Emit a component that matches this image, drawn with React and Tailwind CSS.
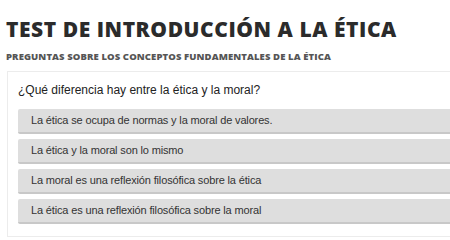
const options = [
  'La ética se ocupa de normas y la moral de valores.',
  'La ética y la moral son lo mismo',
  'La moral es una reflexión filosófica sobre la ética',
  'La ética es una reflexión filosófica sobre la moral',
]

export default function App() {
  return (
    <div className="w-[450px] h-[240px] overflow-hidden bg-white">
      <div className="pl-[6px] pt-[16px]">
        <h1 className="font-['Open_Sans',sans-serif] font-extrabold text-[21px] leading-[26px] text-[#2b2b2b] tracking-[0.55px] whitespace-nowrap">
          TEST DE INTRODUCCIÓN A LA ÉTICA
        </h1>
        <h2 className="mt-[9px] font-['Open_Sans',sans-serif] font-extrabold text-[9.5px] leading-[12px] text-[#555] tracking-[0.1px] whitespace-nowrap">
          PREGUNTAS SOBRE LOS CONCEPTOS FUNDAMENTALES DE LA ÉTICA
        </h2>
      </div>

      <div className="ml-[7px] mt-[8px] w-[460px] border border-[#ececec] bg-white pl-[10px] pt-[10px] pb-[12px]">
        <p className="font-['Liberation_Sans',Arial,sans-serif] text-[12px] leading-[16px] text-[#222]">
          ¿Qué diferencia hay entre la ética y la moral?
        </p>
        <div className="mt-[11px] flex flex-col gap-[5px]">
          {options.map((opt) => (
            <div
              key={opt}
              className="h-[25px] flex items-center pl-[13px] bg-[#dedede] border-b-2 border-[#c8c8c8] rounded-[2px] font-['Liberation_Sans',Arial,sans-serif] text-[11px] tracking-[-0.15px] text-[#333]"
            >
              {opt}
            </div>
          ))}
        </div>
      </div>
    </div>
  )
}
